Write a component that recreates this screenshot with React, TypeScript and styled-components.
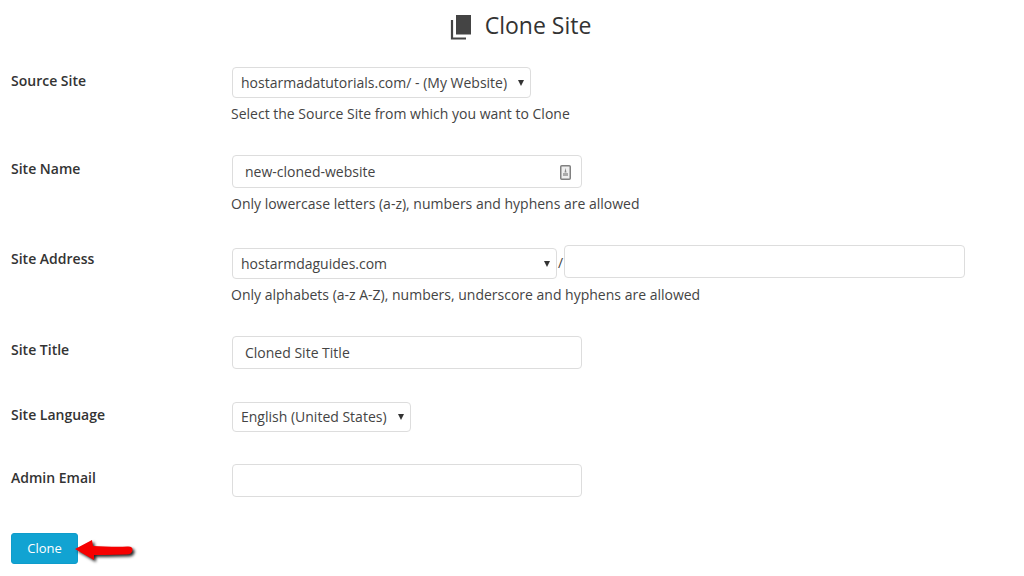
import React from "react";
import styled, { createGlobalStyle } from "styled-components";

const GlobalStyle = createGlobalStyle`
  html, body {
    margin: 0;
    padding: 0;
    background: #fff;
    overflow: hidden;
  }
  body {
    font-family: "Open Sans", "Liberation Sans", sans-serif;
    font-size: 14px;
    color: #444;
  }
`;

const App: React.FC = () => {
  return (
    <Page>
      <GlobalStyle />
      <Heading>
        <CloneIcon />
        <span>Clone Site</span>
      </Heading>
      <form>
        <Row $gap={0}>
          <Label>Source Site</Label>
          <div>
            <SelectWrap $width={299}>
              <Select $height={31} defaultValue="a">
                <option value="a">hostarmadatutorials.com/ - (My Website)</option>
              </Select>
            </SelectWrap>
            <Help>Select the Source Site from which you want to Clone</Help>
          </div>
        </Row>
        <Row $gap={31}>
          <Label>Site Name</Label>
          <div>
            <InputWrap>
              <Input defaultValue="new-cloned-website" />
              <KeyIcon />
            </InputWrap>
            <Help>Only lowercase letters (a-z), numbers and hyphens are allowed</Help>
          </div>
        </Row>
        <Row $gap={31}>
          <Label>Site Address</Label>
          <div>
            <AddressLine>
              <AddressSelect $width={325}>
                <Select $height={31} defaultValue="a">
                  <option value="a">hostarmdaguides.com</option>
                </Select>
              </AddressSelect>
              <Slash>/</Slash>
              <AddressInput />
            </AddressLine>
            <Help>Only alphabets (a-z A-Z), numbers, underscore and hyphens are allowed</Help>
          </div>
        </Row>
        <Row $gap={31}>
          <Label>Site Title</Label>
          <InputWrap>
            <Input defaultValue="Cloned Site Title" />
          </InputWrap>
        </Row>
        <Row $gap={33}>
          <Label $top={3}>Site Language</Label>
          <SelectWrap $width={179}>
            <Select $height={30} $lift={2} defaultValue="a">
              <option value="a">English (United States)</option>
            </Select>
          </SelectWrap>
        </Row>
        <Row $gap={32}>
          <Label>Admin Email</Label>
          <InputWrap>
            <Input />
          </InputWrap>
        </Row>
        <Actions>
          <CloneButton type="button">Clone</CloneButton>
          <RedArrow />
        </Actions>
      </form>
    </Page>
  );
};

export default App;

const CloneIcon = () => (
  <HeadingIcon width="21" height="25" viewBox="0 0 21 25">
    <rect x="6" y="0" width="15" height="19.5" fill="#444" />
    <path d="M2 5v18.5h14" fill="none" stroke="#444" strokeWidth="2.2" />
  </HeadingIcon>
);

const KeyIcon = () => (
  <FieldIcon width="11" height="15" viewBox="0 0 11 15">
    <rect x="0.75" y="0.75" width="9.5" height="13.5" rx="1" fill="#eee" stroke="#808080" strokeWidth="1.5" />
    <path d="M5.5 3 L6.5 7.5 H4.5 Z" fill="#888" />
    <rect x="3" y="8" width="5" height="3" fill="#aaa" />
  </FieldIcon>
);

const RedArrow = () => (
  <ArrowArt width="62" height="26" viewBox="0 0 62 26">
    <path
      d="M0 12 L17 3 L18 9 L30 9.5 Q44 10 52 9.5 Q58 9 57.5 13 Q57 18 50 17.5 L30 18 L19 18 L19 23 Z"
      fill="#f60000"
    />
  </ArrowArt>
);

const Page = styled.div`
  width: 1024px;
  height: 576px;
  box-sizing: border-box;
  padding: 0 0 0 11px;
`;

const Heading = styled.h1`
  display: flex;
  align-items: center;
  justify-content: center;
  gap: 14px;
  margin: 0 0 0 -11px;
  height: 67px;
  padding: 0 0 18px 17px;
  box-sizing: border-box;
  font-size: 23px;
  font-weight: 400;
  line-height: 32px;
  color: #333;
`;

const HeadingIcon = styled.svg`
  display: block;
  flex: none;
  margin-top: 5px;
`;

const Row = styled.div<{ $gap: number }>`
  display: grid;
  grid-template-columns: 221px 1fr;
  margin-top: ${(p) => p.$gap}px;
`;

const Label = styled.label<{ $top?: number }>`
  padding-top: ${(p) => p.$top ?? 4}px;
  font-weight: 600;
  line-height: 20px;
  color: #333;
`;

const Help = styled.p`
  margin: 6px 0 0 -1px;
  line-height: 20px;
  color: #444;
`;

const SelectWrap = styled.div<{ $width: number }>`
  position: relative;
  width: ${(p) => p.$width}px;
  flex: none;

  &::after {
    content: "";
    position: absolute;
    right: 7px;
    top: 50%;
    margin-top: -3px;
    border-left: 3px solid transparent;
    border-right: 3px solid transparent;
    border-top: 6px solid #333;
    pointer-events: none;
  }
`;

const AddressSelect = styled(SelectWrap)`
  margin-top: 3px;
`;

const Select = styled.select<{ $height: number; $lift?: number }>`
  display: block;
  width: 100%;
  height: ${(p) => p.$height}px;
  box-sizing: border-box;
  padding: 0 16px ${(p) => p.$lift ?? 0}px 8px;
  border: 1px solid #ddd;
  border-radius: 4px;
  background: #fff;
  appearance: none;
  font: inherit;
  color: #444;
  outline: none;
`;

const InputWrap = styled.div`
  position: relative;
  width: 350px;
`;

const Input = styled.input`
  display: block;
  width: 100%;
  height: 33px;
  box-sizing: border-box;
  padding: 0 12px;
  border: 1px solid #ddd;
  border-radius: 4px;
  background: #fff;
  font: inherit;
  color: #444;
  outline: none;
`;

const FieldIcon = styled.svg`
  position: absolute;
  right: 11px;
  top: 10px;
`;

const AddressLine = styled.div`
  display: flex;
  align-items: flex-start;
`;

const Slash = styled.span`
  width: 6px;
  margin: 2px 0 0 1px;
  line-height: 32px;
  color: #444;
`;

const AddressInput = styled(Input)`
  width: 401px;
  flex: none;
`;

const Actions = styled.div`
  position: relative;
  margin-top: 36px;
`;

const CloneButton = styled.button`
  display: block;
  width: 67px;
  height: 31px;
  padding: 0 0 2px;
  border: 1px solid #0f9ccb;
  border-radius: 3px;
  background: #11a3d2;
  color: #fff;
  font: inherit;
  font-size: 13px;
`;

const ArrowArt = styled.svg`
  position: absolute;
  left: 64px;
  top: 4px;
  overflow: visible;
  filter: drop-shadow(2px 2px 1.5px rgba(0, 0, 0, 0.85));
`;
